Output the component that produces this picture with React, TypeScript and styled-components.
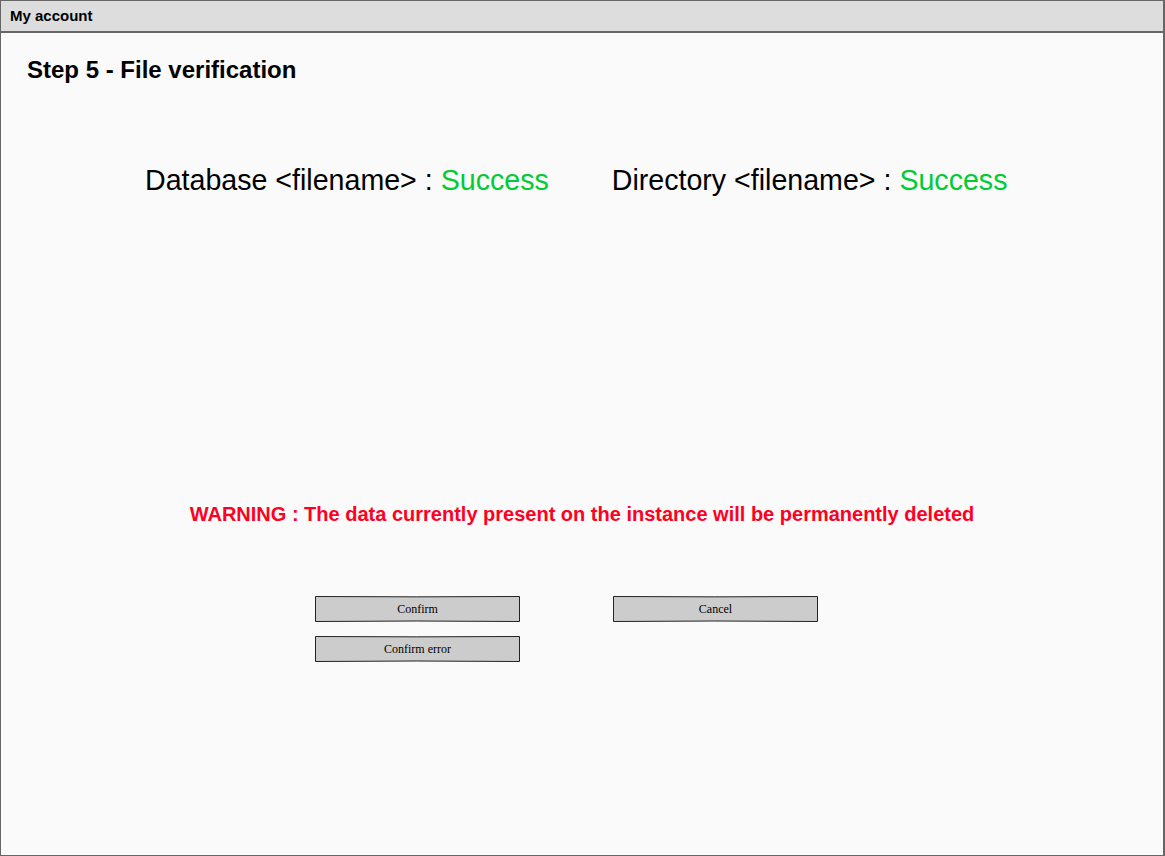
import React from "react";
import styled, { createGlobalStyle } from "styled-components";

const Global = createGlobalStyle`
  html, body { margin: 0; padding: 0; background: #fafafa; }
  body { font-family: "Liberation Sans", Arial, sans-serif; }
`;

const Window = styled.div`
  box-sizing: border-box;
  width: 1165px;
  height: 856px;
  border: 1px solid #666;
  border-right-width: 2px;
  background: #fafafa;
  display: flex;
  flex-direction: column;
`;

const TitleBar = styled.div`
  box-sizing: border-box;
  height: 32px;
  background: #dddddd;
  border-bottom: 2px solid #666;
  padding: 6px 0 0 9px;
  font-size: 15px;
  font-weight: bold;
  color: #000;
`;

const Body = styled.div`
  display: flex;
  flex-direction: column;
  padding: 22px 0 0 26px;
`;

const Heading = styled.h1`
  margin: 0;
  font-size: 24px;
  font-weight: bold;
  line-height: 30px;
  color: #000;
`;

const StatusRow = styled.div`
  display: flex;
  gap: 63px;
  margin: 78px 0 0 118px;
  font-size: 28.6px;
  line-height: 34px;
  color: #000;
`;

const Status = styled.span``;

const Ok = styled.span`
  color: #00cc33;
`;

const Warning = styled.div`
  margin: 305px 0 0 -26px;
  text-align: center;
  font-size: 20px;
  font-weight: bold;
  color: #ff0022;
  line-height: 24px;
`;

const Buttons = styled.div`
  display: grid;
  grid-template-columns: 205px 205px;
  column-gap: 93px;
  row-gap: 14px;
  margin: 70px 0 0 288px;
`;

const Btn = styled.div`
  position: relative;
  height: 26px;
  display: flex;
  align-items: center;
  justify-content: center;
  font-family: "Liberation Serif", "Times New Roman", serif;
  font-size: 12px;
  color: #000;
  svg { position: absolute; inset: 0; }
  span { position: relative; }
`;

function SketchButton({ label }: { label: string }) {
  return (
    <Btn>
      <svg width="205" height="26" viewBox="0 0 205 26">
        <path
          d="M0.5 0.5 Q100 1.2 204.5 0.5 L204.5 25.5 Q100 24.5 0.5 25.5 Z"
          fill="#cccccc"
          stroke="#222"
          strokeWidth="1"
        />
      </svg>
      <span>{label}</span>
    </Btn>
  );
}

export default function App() {
  return (
    <>
      <Global />
      <Window>
        <TitleBar>My account</TitleBar>
        <Body>
          <Heading>Step 5 - File verification</Heading>
          <StatusRow>
            <Status>
              Database &lt;filename&gt; : <Ok>Success</Ok>
            </Status>
            <Status>
              Directory &lt;filename&gt; : <Ok>Success</Ok>
            </Status>
          </StatusRow>
          <Warning>
            WARNING : The data currently present on the instance will be permanently deleted
          </Warning>
          <Buttons>
            <SketchButton label="Confirm" />
            <SketchButton label="Cancel" />
            <SketchButton label="Confirm error" />
          </Buttons>
        </Body>
      </Window>
    </>
  );
}
